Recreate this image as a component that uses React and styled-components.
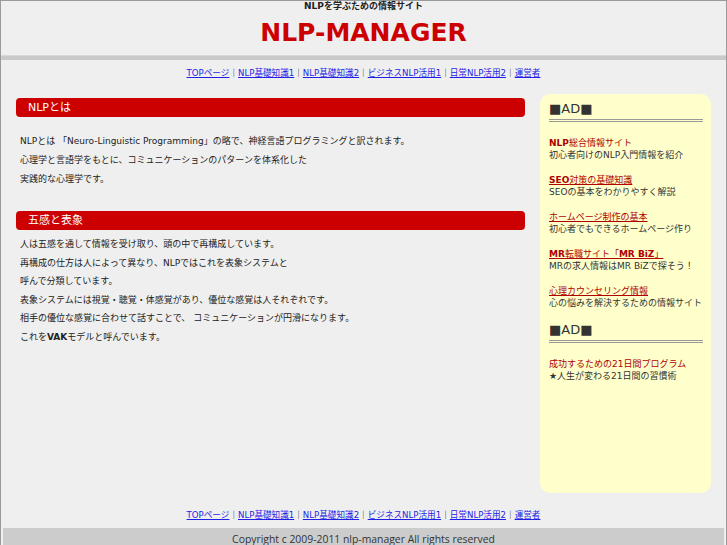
import React from "react";
import styled, { createGlobalStyle } from "styled-components";

const GlobalStyle = createGlobalStyle`
  html, body {
    margin: 0;
    padding: 0;
    background: #efefef;
  }
  body {
    font-family: "DejaVu Sans", "Noto Sans CJK JP", sans-serif;
    color: #222;
  }
`;

const Page = styled.div`
  border: 1px solid #9a9a9a;
  min-height: 560px;
  box-sizing: border-box;
`;

const Header = styled.header`
  text-align: center;
  padding-bottom: 7px;
`;

const Tagline = styled.div`
  font-size: 9px;
  font-weight: bold;
  line-height: 11px;
  color: #222;
`;

const SiteTitle = styled.h1`
  margin: 6px 0 0;
  font-size: 25px;
  line-height: 30px;
  font-weight: bold;
  color: #cc0000;
`;

const Band = styled.div`
  height: 5px;
  background: #c9c9c9;
  border-top: 1px solid #d8d8d8;
  box-sizing: border-box;
`;

const Nav = styled.nav`
  text-align: center;
  font-size: 8.6px;
  line-height: 12px;
  margin: ${(p) => p.$margin};
  a {
    color: #1f1fe6;
    text-decoration: underline;
  }
`;

const Columns = styled.div`
  display: flex;
  gap: 15px;
  padding: 0 15px;
  margin-top: 15px;
`;

const Main = styled.main`
  flex: 1;
  padding-top: 4px;
`;

const SectionTitle = styled.h2`
  margin: ${(p) => p.$margin || "0"};
  height: 19px;
  line-height: 19px;
  padding-left: 12px;
  background: #cc0000;
  color: #fff;
  font-size: 11px;
  font-weight: normal;
  border-radius: 4px;
`;

const Text = styled.p`
  margin: ${(p) => p.$margin};
  padding-left: 4px;
  font-size: 9px;
  line-height: ${(p) => p.$lh}px;
  color: #222;
  white-space: nowrap;
  b {
    font-weight: bold;
  }
`;

const Side = styled.aside`
  width: 171px;
  min-height: 399px;
  box-sizing: border-box;
  background: #ffffcc;
  border-radius: 10px;
  padding: 7px 8px 10px 9px;
`;

const AdHead = styled.div`
  margin-top: ${(p) => p.$top || 0}px;
  font-size: 13px;
  line-height: 16px;
  color: #333;
  padding-bottom: 2px;
  border-bottom: 3px double #999;
`;

const AdItem = styled.div`
  margin-top: ${(p) => (p.$first ? 15 : 13)}px;
  font-size: 9px;
  line-height: 12px;
  white-space: nowrap;
`;

const AdLink = styled.a`
  display: block;
  color: #b00000;
  font-weight: ${(p) => (p.$bold ? "bold" : "normal")};
  text-decoration: ${(p) => (p.$plain ? "none" : "underline")};
  b {
    font-weight: bold;
  }
`;

const AdDesc = styled.div`
  color: #333;
`;

const Footer = styled.footer`
  margin: 0 2px;
  background: #cccccc;
  height: 22px;
  line-height: 22px;
  text-align: center;
  font-family: "Open Sans", "Noto Sans", sans-serif;
  font-size: 10.4px;
  color: #333;
`;

const navItems = [
  "TOPページ",
  "NLP基礎知識1",
  "NLP基礎知識2",
  "ビジネスNLP活用1",
  "日常NLP活用2",
  "運営者",
];

const NavLinks = ({ margin }) => (
  <Nav $margin={margin}>
    {navItems.map((n, i) => (
      <React.Fragment key={n}>
        {i > 0 && "｜"}
        <a href="#">{n}</a>
      </React.Fragment>
    ))}
  </Nav>
);

const ads = [
  {
    title: (
      <>
        <b>NLP</b>総合情報サイト
      </>
    ),
    desc: "初心者向けのNLP入門情報を紹介",
    plain: true,
  },
  {
    title: (
      <>
        <b>SEO</b>対策の基礎知識
      </>
    ),
    desc: "SEOの基本をわかりやすく解説",
  },
  { title: "ホームページ制作の基本", desc: "初心者でもできるホームページ作り" },
  {
    title: (
      <>
        <b>MR</b>転職サイト「<b>MR BiZ</b>」
      </>
    ),
    desc: "MRの求人情報はMR BiZで探そう！",
  },
  { title: "心理カウンセリング情報", desc: "心の悩みを解決するための情報サイト" },
];

export default function App() {
  return (
    <>
      <GlobalStyle />
      <Page>
        <Header>
          <Tagline>NLPを学ぶための情報サイト</Tagline>
          <SiteTitle>NLP-MANAGER</SiteTitle>
        </Header>
        <Band />
        <NavLinks margin="7px 0 0" />

        <Columns>
          <Main>
            <SectionTitle>NLPとは</SectionTitle>
            <Text $margin="15px 0 0" $lh={19}>
              NLPとは 「Neuro-Linguistic Programming」の略で、神経言語プログラミングと訳されます。
              <br />
              心理学と言語学をもとに、コミュニケーションのパターンを体系化した
              <br />
              実践的な心理学です。
            </Text>

            <SectionTitle $margin="22px 0 0">五感と表象</SectionTitle>
            <Text $margin="5px 0 0" $lh={18.6}>
              人は五感を通して情報を受け取り、頭の中で再構成しています。
              <br />
              再構成の仕方は人によって異なり、NLPではこれを表象システムと
              <br />
              呼んで分類しています。
              <br />
              表象システムには視覚・聴覚・体感覚があり、優位な感覚は人それぞれです。
              <br />
              相手の優位な感覚に合わせて話すことで、 コミュニケーションが円滑になります。
              <br />
              これを<b>VAK</b>モデルと呼んでいます。
            </Text>
          </Main>

          <Side>
            <AdHead>■AD■</AdHead>
            {ads.map((ad, i) => (
              <AdItem key={i} $first={i === 0}>
                <AdLink href="#" $plain={ad.plain}>
                  {ad.title}
                </AdLink>
                <AdDesc>{ad.desc}</AdDesc>
              </AdItem>
            ))}
            <AdHead $top={13}>■AD■</AdHead>
            <AdItem $first>
              <AdLink href="#" $plain>
                成功するための21日間プログラム
              </AdLink>
              <AdDesc>★人生が変わる21日間の習慣術</AdDesc>
            </AdItem>
          </Side>
        </Columns>

        <NavLinks margin="16px 0 7px" />
        <Footer>Copyright c 2009-2011 nlp-manager All rights reserved</Footer>
      </Page>
    </>
  );
}
